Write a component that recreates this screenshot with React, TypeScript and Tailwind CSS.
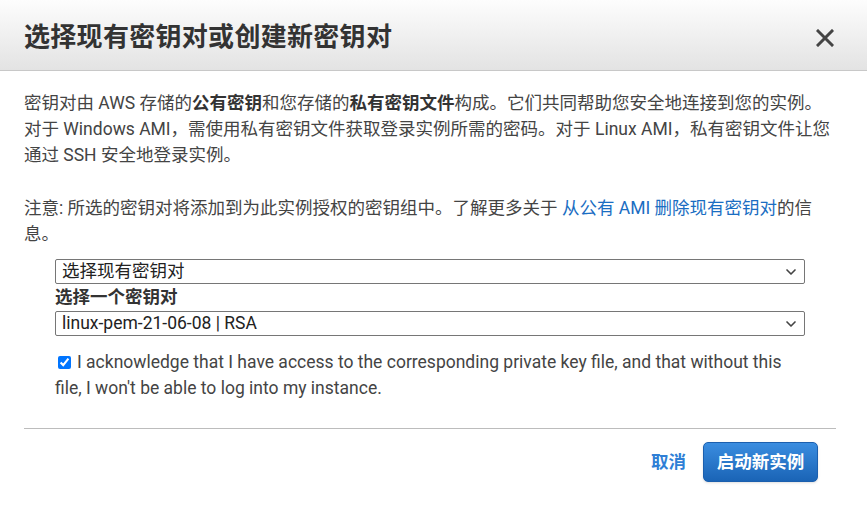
import { ChevronDown } from 'lucide-react';

const font = { fontFamily: 'Roboto, "Noto Sans CJK SC", sans-serif' };

function Select({ value }: { value: string }) {
  return (
    <div className="ml-[31px] w-[750px] h-[25px] border border-[#767676] rounded-[2px] bg-white flex items-center justify-between pl-[6px] pr-[5px] text-[17.5px] text-[#222]">
      <span className="leading-none">{value}</span>
      <ChevronDown size={16} strokeWidth={2.5} className="text-[#444]" />
    </div>
  );
}

export default function App() {
  return (
    <div className="w-[867px] h-[507px] bg-white overflow-hidden" style={font}>
      <div className="h-[71px] bg-gradient-to-b from-[#fdfdfd] to-[#e3e3e3] border-b border-[#c8c8c8] flex items-center justify-between pl-6 pr-[33px]">
        <h2 className="text-[26px] font-bold text-[#333] tracking-[0.3px] mt-[4px]">选择现有密钥对或创建新密钥对</h2>
        <svg width="18" height="18" viewBox="0 0 18 18" className="mt-[6px]">
          <path d="M2 2 L16 16 M16 2 L2 16" stroke="#444" strokeWidth="3" strokeLinecap="square" />
        </svg>
      </div>

      <div className="pl-6 pr-[31px] pt-[19px] text-[17.5px] leading-[26px] text-[#444]">
        <p>
          密钥对由 AWS 存储的<b className="text-[#333]">公有密钥</b>和您存储的<b className="text-[#333]">私有密钥文件</b>构成。它们共同帮助您安全地连接到您的实例。对于 Windows AMI，需使用私有密钥文件获取登录实例所需的密码。对于 Linux AMI，私有密钥文件让您通过 SSH 安全地登录实例。
        </p>
        <p className="mt-[27px]">
          注意: 所选的密钥对将添加到为此实例授权的密钥组中。了解更多关于 <a className="text-[#1a6dc2]">从公有 AMI 删除现有密钥对</a>的信息。
        </p>

        <div className="mt-[12px]">
          <Select value="选择现有密钥对" />
          <div className="ml-[31px] font-bold text-[#333] leading-[27px]">选择一个密钥对</div>
          <Select value="linux-pem-21-06-08 | RSA" />
        </div>

        <p className="mt-[13px] ml-[31px] mr-[31px]">
          <input type="checkbox" defaultChecked className="w-[13px] h-[13px] mr-[6px] ml-[3px] align-[-1px] accent-[#0075ff]" />
          I acknowledge that I have access to the corresponding private key file, and that without this file, I won't be able to log into my instance.
        </p>

        <div className="mt-[27px] border-t border-[#bcbcbc]" />

        <div className="flex items-center justify-end gap-[17px] pt-[13px] pr-[18px]">
          <button className="text-[17.5px] font-bold text-[#2f7fd6]">取消</button>
          <button className="h-[40px] w-[115px] rounded-[5px] border border-[#1b5fae] bg-gradient-to-b from-[#3a8de0] to-[#1a64b6] text-white font-bold text-[17.5px] shadow-sm">
            启动新实例
          </button>
        </div>
      </div>
    </div>
  );
}
